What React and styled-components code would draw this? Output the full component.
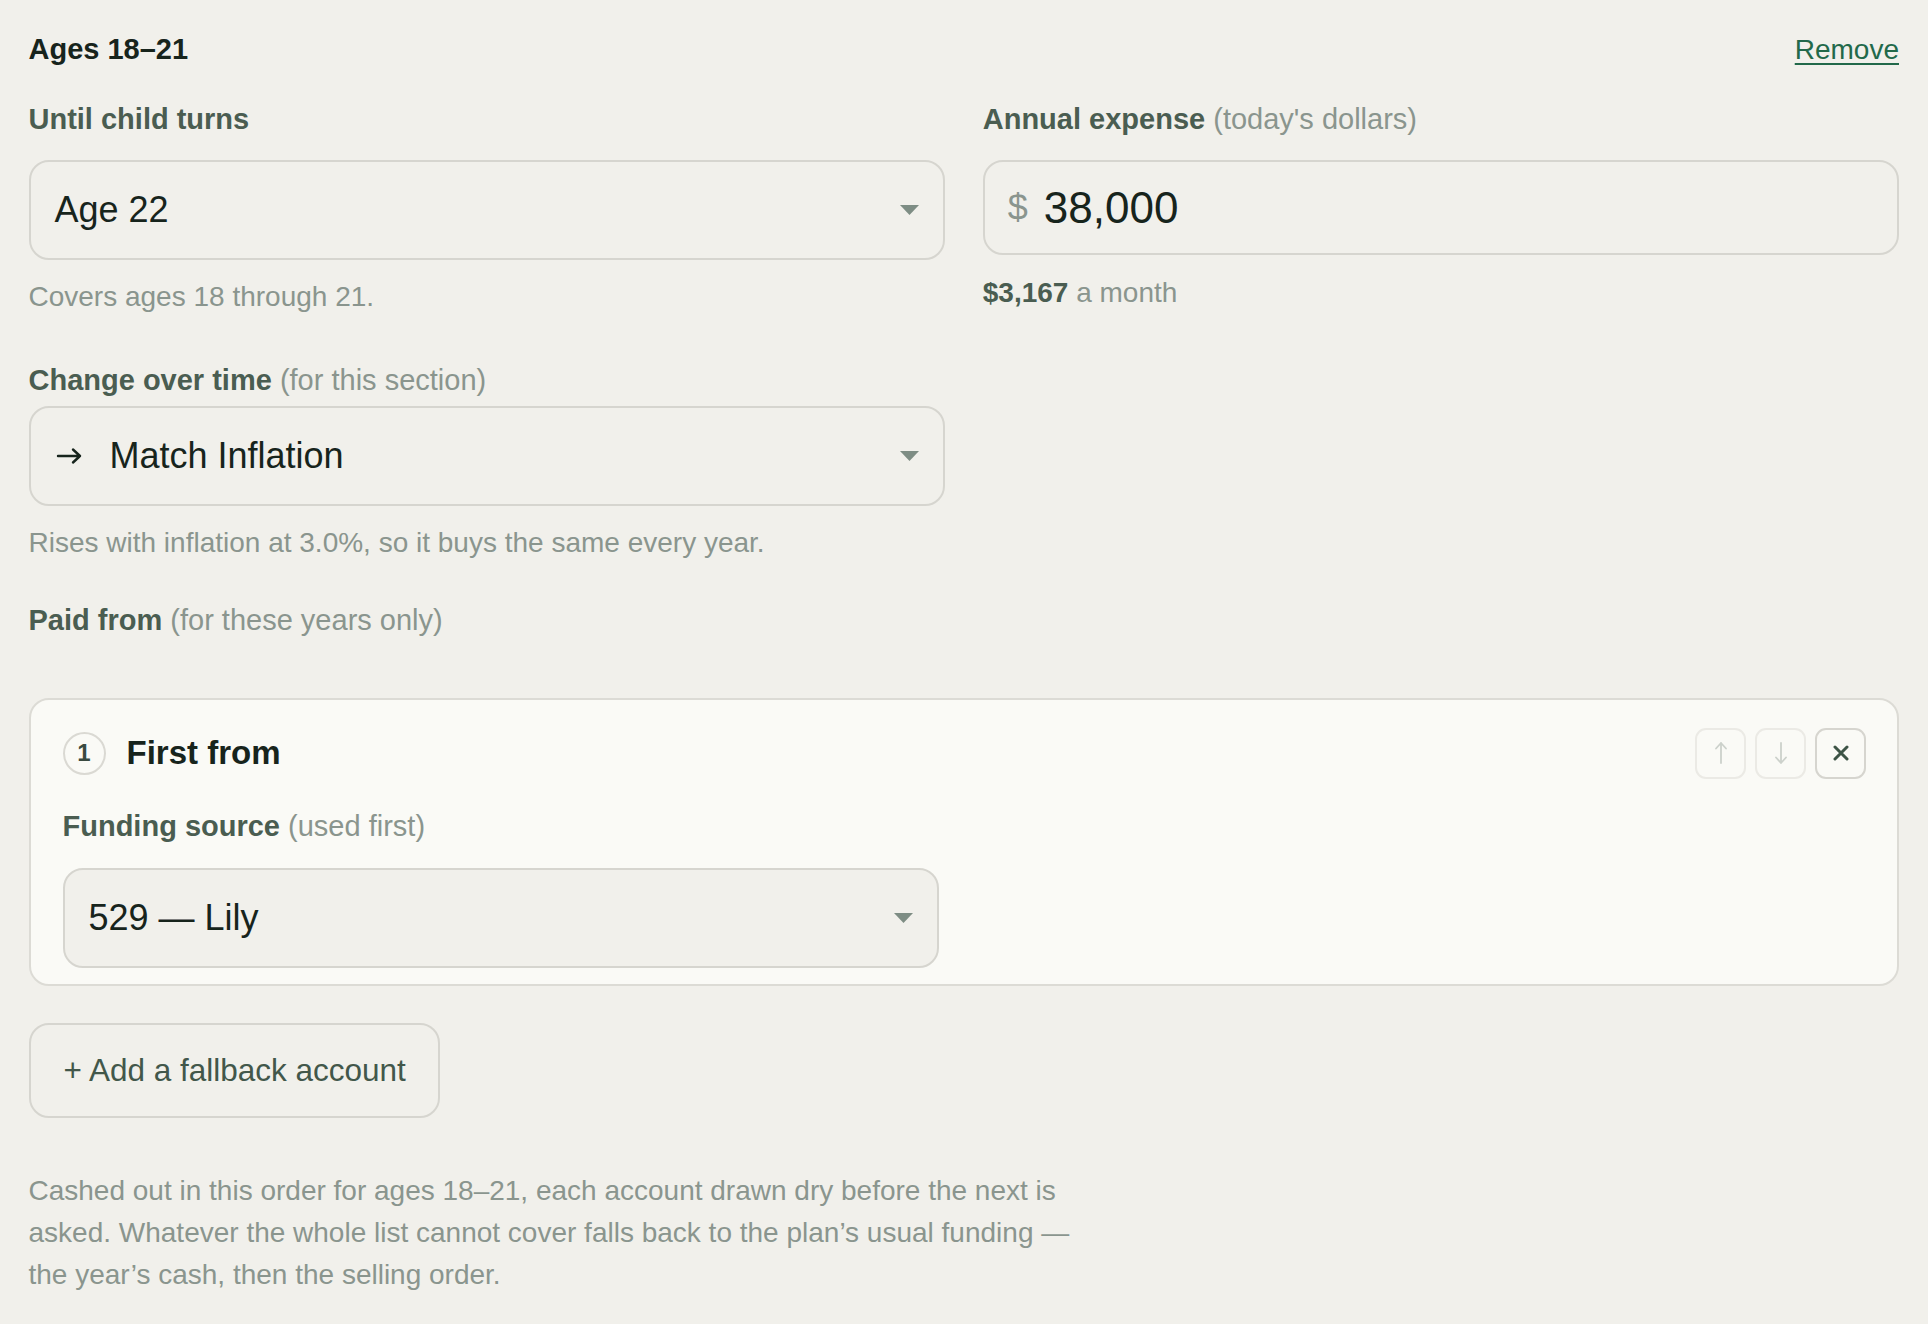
import React from "react";
import styled, { createGlobalStyle } from "styled-components";

const colours = {
  page: "#f1f0eb",
  card: "#fafaf6",
  border: "#d6d5cf",
  softBorder: "#ebeae5",
  ink: "#17241c",
  label: "#4a5d51",
  muted: "#8a958e",
  link: "#22694a",
  caret: "#7e8d84",
  faint: "#ccd1cb",
};

const GlobalStyle = createGlobalStyle`
  html, body {
    margin: 0;
    background: ${colours.page};
  }
  body {
    font-family: "Liberation Sans", Arial, Helvetica, sans-serif;
    -webkit-font-smoothing: antialiased;
  }
  * { box-sizing: border-box; }
`;

const Caret = () => (
  <svg width="19" height="10" viewBox="0 0 19 10" aria-hidden="true">
    <polygon points="0,0 19,0 9.5,10" fill={colours.caret} />
  </svg>
);

const RightArrow = () => (
  <svg width="28" height="18" viewBox="0 0 28 18" aria-hidden="true">
    <path
      d="M3 9 H25 M18 2.5 L25 9 L18 15.5"
      fill="none"
      stroke={colours.ink}
      strokeWidth="2.4"
      strokeLinecap="round"
      strokeLinejoin="round"
    />
  </svg>
);

const UpArrow = () => (
  <svg width="14" height="24" viewBox="0 0 14 24" aria-hidden="true">
    <path
      d="M7 22 V2 M2 7.5 L7 2 L12 7.5"
      fill="none"
      stroke={colours.faint}
      strokeWidth="1.8"
      strokeLinecap="round"
      strokeLinejoin="round"
    />
  </svg>
);

const DownArrow = () => (
  <svg width="14" height="24" viewBox="0 0 14 24" aria-hidden="true">
    <path
      d="M7 2 V22 M2 16.5 L7 22 L12 16.5"
      fill="none"
      stroke={colours.faint}
      strokeWidth="1.8"
      strokeLinecap="round"
      strokeLinejoin="round"
    />
  </svg>
);

const CloseIcon = () => (
  <svg width="16" height="16" viewBox="0 0 16 16" aria-hidden="true">
    <path
      d="M2 2 L14 14 M14 2 L2 14"
      fill="none"
      stroke="#3d5446"
      strokeWidth="3"
      strokeLinecap="round"
    />
  </svg>
);

export default function App() {
  return (
    <>
      <GlobalStyle />
      <Page>
        <HeaderRow>
          <Title>Ages 18–21</Title>
          <RemoveLink href="#">Remove</RemoveLink>
        </HeaderRow>

        <FieldGrid>
          <Field>
            <Label>Until child turns</Label>
            <SelectBox>
              <Value>Age 22</Value>
              <Caret />
            </SelectBox>
            <Help>Covers ages 18 through 21.</Help>
          </Field>
          <Field>
            <Label>
              Annual expense <Aside>(today's dollars)</Aside>
            </Label>
            <MoneyBox>
              <Currency>$</Currency>
              <Amount>38,000</Amount>
            </MoneyBox>
            <Help $top={17.3}>
              <Strong>$3,167</Strong> a month
            </Help>
          </Field>
        </FieldGrid>

        <HalfField $top={45.2}>
          <Label $gap={7.5}>
            Change over time <Aside>(for this section)</Aside>
          </Label>
          <SelectBox>
            <RightArrow />
            <Value $indent={27}>Match Inflation</Value>
            <Caret />
          </SelectBox>
          <Help>Rises with inflation at 3.0%, so it buys the same every year.</Help>
        </HalfField>

        <SectionLabel>
          Paid from <Aside>(for these years only)</Aside>
        </SectionLabel>

        <SourceCard>
          <CardHead>
            <StepBadge>1</StepBadge>
            <CardTitle>First from</CardTitle>
            <Tools>
              <ToolButton $disabled aria-label="Move up">
                <UpArrow />
              </ToolButton>
              <ToolButton $disabled aria-label="Move down">
                <DownArrow />
              </ToolButton>
              <ToolButton aria-label="Remove source">
                <CloseIcon />
              </ToolButton>
            </Tools>
          </CardHead>
          <CardGrid>
            <Field>
              <Label>
                Funding source <Aside>(used first)</Aside>
              </Label>
              <SelectBox $tinted>
                <Value>529 — Lily</Value>
                <Caret />
              </SelectBox>
            </Field>
          </CardGrid>
        </SourceCard>

        <AddButton type="button">+ Add a fallback account</AddButton>

        <Footnote>
          Cashed out in this order for ages 18–21, each account drawn dry before
          the next is asked. Whatever the whole list cannot cover falls back to
          the plan’s usual funding — the year’s cash, then the selling order.
        </Footnote>
      </Page>
    </>
  );
}

const Page = styled.div`
  display: flex;
  flex-direction: column;
  min-height: 100vh;
  padding: 31.5px 29px 28px 28.5px;
  background: ${colours.page};
`;

const HeaderRow = styled.div`
  display: flex;
  justify-content: space-between;
  align-items: baseline;
`;

const Title = styled.h2`
  margin: 0;
  font-size: 29px;
  line-height: 35px;
  font-weight: 700;
  color: ${colours.ink};
`;

const RemoveLink = styled.a`
  font-size: 28px;
  line-height: 35px;
  color: ${colours.link};
  text-decoration: underline;
  text-decoration-thickness: 2px;
  text-underline-offset: 4px;
`;

const FieldGrid = styled.div`
  display: grid;
  grid-template-columns: 1fr 1fr;
  column-gap: 38px;
  margin-top: 35px;
`;

const Field = styled.div`
  display: flex;
  flex-direction: column;
  min-width: 0;
`;

const HalfField = styled(Field)`
  width: calc((100% - 38px) / 2);
  margin-top: ${(p) => p.$top}px;
`;

const Label = styled.div`
  font-size: 29px;
  line-height: 35px;
  font-weight: 700;
  color: ${colours.label};
  margin-bottom: ${(p) => p.$gap ?? 23.5}px;
`;

const SectionLabel = styled(Label)`
  margin-top: 39.2px;
  margin-bottom: 0;
`;

const Aside = styled.span`
  font-weight: 400;
  color: ${colours.muted};
`;

const SelectBox = styled.div`
  display: flex;
  align-items: center;
  height: 100px;
  padding: 0 24px;
  border: 2px solid ${colours.border};
  border-radius: 20px;
  background: ${(p) => (p.$tinted ? colours.page : "transparent")};
`;

const Value = styled.span`
  flex: 1;
  margin-left: ${(p) => p.$indent ?? 0}px;
  font-size: 36px;
  line-height: 42px;
  color: ${colours.ink};
`;

const MoneyBox = styled.div`
  display: flex;
  align-items: center;
  height: 95px;
  padding: 0 23px;
  border: 2px solid ${colours.border};
  border-radius: 20px;
`;

const Currency = styled.span`
  font-size: 36px;
  color: ${colours.muted};
  margin-right: 16px;
`;

const Amount = styled.span`
  font-size: 44px;
  line-height: 50px;
  color: ${colours.ink};
`;

const Help = styled.div`
  margin-top: ${(p) => p.$top ?? 16.3}px;
  font-size: 28px;
  line-height: 42px;
  color: ${colours.muted};
`;

const Strong = styled.strong`
  font-weight: 700;
  color: ${colours.label};
`;

const SourceCard = styled.div`
  margin-top: 59.5px;
  padding: 28px 31px 16px 32px;
  background: ${colours.card};
  border: 2px solid #dcdbd5;
  border-radius: 20px;
`;

const CardHead = styled.div`
  display: flex;
  align-items: center;
  height: 51px;
`;

const StepBadge = styled.span`
  display: grid;
  place-items: center;
  width: 43px;
  height: 43px;
  border: 2px solid #dad9d3;
  border-radius: 50%;
  font-size: 24px;
  font-weight: 700;
  color: #3a4a40;
`;

const CardTitle = styled.h3`
  margin: 0 0 0 21px;
  font-size: 33px;
  font-weight: 700;
  color: ${colours.ink};
`;

const Tools = styled.div`
  display: flex;
  gap: 9px;
  margin-left: auto;
`;

const ToolButton = styled.button`
  display: grid;
  place-items: center;
  width: 51px;
  height: 51px;
  padding: 0;
  background: transparent;
  border: 2px solid ${(p) => (p.$disabled ? colours.softBorder : colours.border)};
  border-radius: 11px;
  cursor: ${(p) => (p.$disabled ? "default" : "pointer")};
`;

const CardGrid = styled.div`
  display: grid;
  grid-template-columns: 1fr 1fr;
  column-gap: 50px;
  margin-top: 30.5px;
`;

const AddButton = styled.button`
  align-self: flex-start;
  margin-top: 37px;
  height: 95px;
  padding: 0 32px 0 33px;
  background: transparent;
  border: 2px solid ${colours.border};
  border-radius: 20px;
  font-family: inherit;
  font-size: 31.5px;
  color: #42574a;
  cursor: pointer;
`;

const Footnote = styled.p`
  margin: 52.3px 0 0;
  max-width: 1085px;
  font-size: 28px;
  line-height: 42px;
  color: ${colours.muted};
`;
